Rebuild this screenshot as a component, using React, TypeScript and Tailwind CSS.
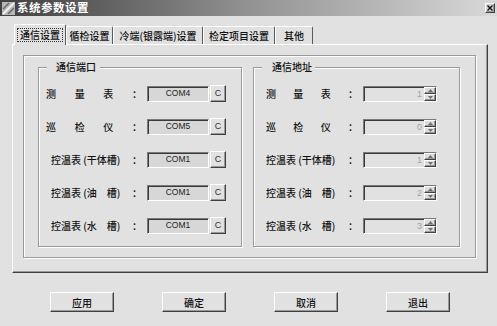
import React from 'react';

const raised =
  'border border-t-white border-l-white border-r-[#404040] border-b-[#404040] shadow-[inset_-1px_-1px_0_#999]';
const sunken =
  'border border-t-[#7a7a7a] border-l-[#7a7a7a] border-r-white border-b-white shadow-[inset_1px_1px_0_#3a3a3a]';
const etched = 'border border-[#9a9a9a] shadow-[1px_1px_0_#fff,inset_1px_1px_0_#fff]';

const tabs = [
  { label: '通信设置', w: 'w-[52px]' },
  { label: '循检设置', w: 'w-[47px]' },
  { label: '冷端(银露端)设置', w: 'w-[90px]' },
  { label: '检定项目设置', w: 'w-[72px]' },
  { label: '其他', w: 'w-[38px]' },
];

type Row = { chars?: string[]; text?: string; port: string; addr: string };

const rows: Row[] = [
  { chars: ['测', '量', '表'], port: 'COM4', addr: '1' },
  { chars: ['巡', '检', '仪'], port: 'COM5', addr: '0' },
  { text: '控温表 (干体槽)', port: 'COM1', addr: '1' },
  { text: '控温表 (油　槽)', port: 'COM1', addr: '2' },
  { text: '控温表 (水　槽)', port: 'COM1', addr: '3' },
];

const Label: React.FC<{ row: Row; step: string; pad: string; w: string }> = ({ row, step, pad, w }) => (
  <div className={`flex items-center ${w}`}>
    {row.chars ? (
      row.chars.map((c) => (
        <span key={c} className={step}>
          {c}
        </span>
      ))
    ) : (
      <span className={`${pad} whitespace-pre`}>{row.text}</span>
    )}
  </div>
);

const Arrow: React.FC<{ up?: boolean }> = ({ up }) => (
  <svg width="5" height="3" viewBox="0 0 5 3">
    <path d={up ? 'M0 3 L2.5 0 L5 3 Z' : 'M0 0 L2.5 3 L5 0 Z'} fill="#707070" />
  </svg>
);

const GroupBox: React.FC<{ title: string; w: string; labelCls: string; children: React.ReactNode }> = ({
  title,
  w,
  labelCls,
  children,
}) => (
  <div className={`relative h-[180px] ${w} ${etched}`}>
    <span className={`absolute left-[8px] top-[-8px] bg-[#e1e1e1] leading-[14px] ${labelCls}`}>{title}</span>
    <div className="flex flex-col gap-[16px] pt-[17px]">{children}</div>
  </div>
);

export default function App() {
  return (
    <div className="w-[497px] h-[326px] bg-[#e1e1e1] text-[10px] font-medium text-[#111] font-['Noto_Sans_CJK_SC','Noto_Sans',sans-serif] overflow-hidden">
      {/* title bar */}
      <div className="h-[16px] flex items-center bg-linear-to-r from-[#404040] via-[#929292] to-[#d9d9d9]">
        <svg width="13" height="13" viewBox="0 0 13 13" className="ml-[2px]">
          <rect x="0" y="0" width="13" height="13" fill="#b8b8b8" />
          <path d="M1 12 L12 1" stroke="#f0f0f0" strokeWidth="2" />
          <path d="M1 7 L7 1 M6 12 L12 6" stroke="#6a6a6a" strokeWidth="1.5" />
        </svg>
        <span className="ml-[2px] text-[11.5px] font-bold text-white tracking-[0.5px] leading-none">系统参数设置</span>
        <div className={`ml-auto mr-[2px] w-[10px] h-[10px] bg-[#d4d4d4] flex items-center justify-center ${raised}`}>
          <svg width="6" height="6" viewBox="0 0 6 6">
            <path d="M0.5 0.5 L5.5 5.5 M5.5 0.5 L0.5 5.5" stroke="#111" strokeWidth="1.4" />
          </svg>
        </div>
      </div>

      {/* tabs */}
      <div className="mt-[8px] pl-[14px] h-[20px] flex items-end relative z-10">
        {tabs.map((t, i) => (
          <div
            key={t.label}
            className={`${t.w} flex items-center justify-center border-t border-l border-r border-t-white border-l-white border-r-[#5a5a5a] bg-[#e1e1e1] rounded-t-[2px] ${
              i === 0 ? 'h-[21px] -mb-px' : 'h-[18px]'
            }`}
          >
            {i === 0 ? (
              <span className="px-[2px] border border-dotted border-[#333] leading-[12px]">{t.label}</span>
            ) : (
              <span className="leading-[12px]">{t.label}</span>
            )}
          </div>
        ))}
      </div>

      {/* tab panel */}
      <div className="ml-[12px] w-[476px] h-[229px] border border-t-white border-l-white border-r-[#404040] border-b-[#404040] shadow-[inset_-1px_-1px_0_#9a9a9a] pt-[10px] pl-[10px]">
        <div className={`w-[453px] h-[203px] ${etched} pt-[11px] pl-[14px]`}>
          <div className="flex gap-[11px]">
            <GroupBox title="通信端口" w="w-[204px]" labelCls="pl-[9px] pr-[4px]">
              {rows.map((r) => (
                <div key={r.text ?? r.port + r.chars?.join('')} className="flex items-center h-[17px] pl-[7px]">
                  <Label row={r} step="w-[35px]" pad="pl-[5px]" w="w-[86px]" />
                  <span className="w-[15px]">：</span>
                  <div className={`w-[62px] h-[16px] bg-[#d7d7d7] flex items-center justify-center text-[8.5px] text-[#222] font-['Liberation_Sans',sans-serif] ${sunken}`}>
                    {r.port}
                  </div>
                  <div className={`ml-[1px] w-[16px] h-[17px] bg-[#e1e1e1] flex items-center justify-center text-[9px] font-normal text-[#333] font-['Liberation_Sans',sans-serif] ${raised}`}>
                    C
                  </div>
                </div>
              ))}
            </GroupBox>
            <GroupBox title="通信地址" w="w-[207px]" labelCls="pl-[10px] pr-[3px]">
              {rows.map((r) => (
                <div key={(r.text ?? r.chars?.join('')) + r.addr} className="flex items-center h-[17px] pl-[12px]">
                  <Label row={r} step="w-[28px]" pad="" w="w-[82px]" />
                  <span className="w-[15px]">：</span>
                  <div className={`w-[74px] h-[16px] flex items-stretch ${sunken}`}>
                    <span className="flex-1 text-right pr-[2px] text-[#a3a3a3] text-[9px] font-normal leading-[14px] font-['Liberation_Sans',sans-serif]">
                      {r.addr}
                    </span>
                    <div className="w-[12px] flex flex-col">
                      <div className={`flex-1 flex items-center justify-center bg-[#dcdcdc] ${raised}`}>
                        <Arrow up />
                      </div>
                      <div className={`flex-1 flex items-center justify-center bg-[#dcdcdc] ${raised}`}>
                        <Arrow />
                      </div>
                    </div>
                  </div>
                </div>
              ))}
            </GroupBox>
          </div>
        </div>
      </div>

      {/* buttons */}
      <div className="mt-[19px] pl-[50px] flex gap-[48px]">
        {['应用', '确定', '取消', '退出'].map((b) => (
          <div key={b} className={`w-[64px] h-[20px] flex items-center justify-center bg-[#e1e1e1] ${raised}`}>
            {b}
          </div>
        ))}
      </div>
    </div>
  );
}
